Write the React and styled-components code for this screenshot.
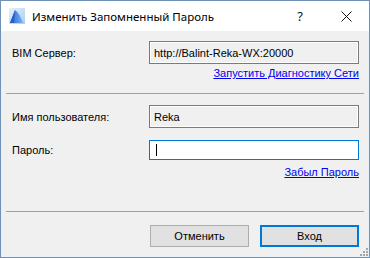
import styled, { createGlobalStyle } from "styled-components";

const GlobalStyle = createGlobalStyle`
  html, body {
    margin: 0;
    padding: 0;
    background: #ffffff;
  }
  * {
    box-sizing: border-box;
  }
`;

const AppIcon = () => (
  <svg width="16" height="16" viewBox="0 0 16 16">
    <defs>
      <linearGradient id="bg" x1="0" y1="0" x2="1" y2="1">
        <stop offset="0" stopColor="#e6f1fc" />
        <stop offset="1" stopColor="#a9ccf2" />
      </linearGradient>
      <linearGradient id="sail" x1="0" y1="0" x2="1" y2="0">
        <stop offset="0" stopColor="#1f64d8" />
        <stop offset="1" stopColor="#7fb2f2" />
      </linearGradient>
    </defs>
    <rect x="0" y="0" width="16" height="16" fill="url(#bg)" />
    <path d="M1 15 L6 2 C9 4 12 9 14 15 Z" fill="url(#sail)" />
    <path d="M6 2 L5 15 L1 15 Z" fill="#2a5fc4" />
  </svg>
);

const App = () => {
  return (
    <>
      <GlobalStyle />
      <Window>
        <TitleBar>
          <TitleIcon>
            <AppIcon />
          </TitleIcon>
          <Title>Изменить Запомненный Пароль</Title>
          <TitleButton $width={46}>?</TitleButton>
          <TitleButton $width={46}>
            <svg width="11" height="11" viewBox="0 0 11 11">
              <path d="M0.5 0.5 L10.5 10.5 M10.5 0.5 L0.5 10.5" stroke="#111" strokeWidth="1" />
            </svg>
          </TitleButton>
        </TitleBar>
        <Body>
          <Section $top={10}>
            <Row>
              <Label>BIM Сервер:</Label>
              <Field $height={23}>http://Balint-Reka-WX:20000</Field>
            </Row>
            <LinkRow $top={2}>
              <Link href="#">Запустить Диагностику Сети</Link>
            </LinkRow>
          </Section>
          <Separator $top={13} />
          <Section $top={11}>
            <Row>
              <Label>Имя пользователя:</Label>
              <Field $height={23}>Reka</Field>
            </Row>
            <Row $top={12}>
              <Label>Пароль:</Label>
              <Field $height={20} $active>
                <Caret />
              </Field>
            </Row>
            <LinkRow $top={5}>
              <Link href="#">Забыл Пароль</Link>
            </LinkRow>
          </Section>
          <Separator $top={32} />
          <Buttons>
            <Button>Отменить</Button>
            <Button $default>Вход</Button>
          </Buttons>
          <Grip>
            <svg width="8" height="8" viewBox="0 0 8 8">
              <g fill="#a6a6a6">
                <rect x="6" y="0" width="2" height="2" />
                <rect x="3" y="3" width="2" height="2" />
                <rect x="6" y="3" width="2" height="2" />
                <rect x="0" y="6" width="2" height="2" />
                <rect x="3" y="6" width="2" height="2" />
                <rect x="6" y="6" width="2" height="2" />
              </g>
            </svg>
          </Grip>
        </Body>
      </Window>
    </>
  );
};

const Window = styled.div`
  width: 370px;
  height: 258px;
  border: 1px solid #7091b6;
  display: flex;
  flex-direction: column;
  background: #f0f0f0;
  font-family: "Liberation Sans", Arial, sans-serif;
  font-size: 11px;
  color: #000;
`;

const TitleBar = styled.div`
  height: 30px;
  flex: 0 0 30px;
  background: #ffffff;
  display: flex;
  align-items: center;
  padding-left: 8px;
`;

const TitleIcon = styled.div`
  width: 16px;
  height: 16px;
  margin-right: 7px;
  display: flex;
`;

const Title = styled.div`
  flex: 1;
  font-family: "Noto Sans", "Open Sans", sans-serif;
  font-size: 11.5px;
  color: #000;
`;

const TitleButton = styled.div`
  width: ${(p) => p.$width}px;
  height: 30px;
  display: flex;
  align-items: center;
  justify-content: center;
  font-family: "Noto Sans", sans-serif;
  font-size: 13px;
  color: #111;
`;

const Body = styled.div`
  flex: 1;
  position: relative;
  padding: 0 5px;
  display: flex;
  flex-direction: column;
`;

const Section = styled.div`
  padding: ${(p) => p.$top}px 5px 0 6px;
  display: flex;
  flex-direction: column;
`;

const Row = styled.div`
  display: grid;
  grid-template-columns: 137px 1fr;
  align-items: center;
  margin-top: ${(p) => p.$top || 0}px;
`;

const Label = styled.div`
  white-space: nowrap;
`;

const Field = styled.div`
  height: ${(p) => p.$height}px;
  border: 1px solid ${(p) => (p.$active ? "#0078d7" : "#7a7a7a")};
  background: ${(p) => (p.$active ? "#ffffff" : "#f0f0f0")};
  box-shadow: ${(p) => (p.$active ? "none" : "inset 1px 1px 0 #ffffff, inset -1px -1px 0 #ffffff")};
  display: flex;
  align-items: center;
  padding-left: 4px;
  white-space: nowrap;
`;

const Caret = styled.span`
  display: block;
  width: 1px;
  height: 12px;
  margin-left: 2px;
  background: #000;
`;

const LinkRow = styled.div`
  display: flex;
  justify-content: flex-end;
  margin-top: ${(p) => p.$top}px;
  height: 14px;
  align-items: center;
`;

const Link = styled.a`
  color: #0000f0;
  text-decoration: underline;
`;

const Separator = styled.div`
  height: 1px;
  background: #a0a0a0;
  margin-top: ${(p) => p.$top}px;
`;

const Buttons = styled.div`
  display: flex;
  justify-content: flex-end;
  gap: 11px;
  padding: 13px 5px 0 0;
`;

const Button = styled.div`
  width: 99px;
  height: 22px;
  display: flex;
  align-items: center;
  justify-content: center;
  background: #e1e1e1;
  border: ${(p) => (p.$default ? "2px solid #0078d7" : "1px solid #adadad")};
`;

const Grip = styled.div`
  position: absolute;
  right: 1px;
  bottom: 1px;
  display: flex;
`;

export default App;
